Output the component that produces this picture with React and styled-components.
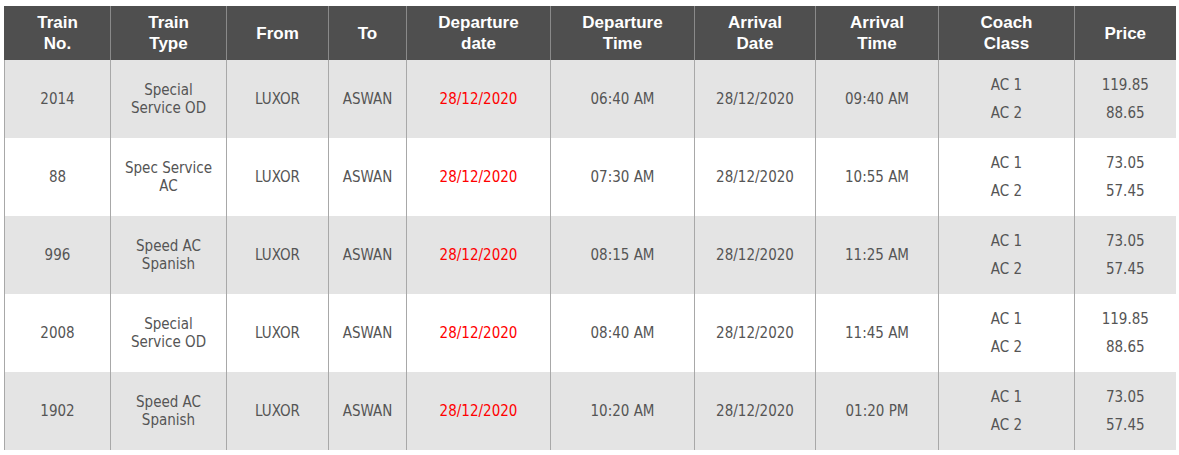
import React from 'react'
import styled, { createGlobalStyle } from 'styled-components';

const trains = [
  { no: '2014', type: ['Special', 'Service OD'], dep: '06:40 AM', arr: '09:40 AM', prices: ['119.85', '88.65'] },
  { no: '88', type: ['Spec Service', 'AC'], dep: '07:30 AM', arr: '10:55 AM', prices: ['73.05', '57.45'] },
  { no: '996', type: ['Speed AC', 'Spanish'], dep: '08:15 AM', arr: '11:25 AM', prices: ['73.05', '57.45'] },
  { no: '2008', type: ['Special', 'Service OD'], dep: '08:40 AM', arr: '11:45 AM', prices: ['119.85', '88.65'] },
  { no: '1902', type: ['Speed AC', 'Spanish'], dep: '10:20 AM', arr: '01:20 PM', prices: ['73.05', '57.45'] }
];

const columns = [
  { w: 106, label: ['Train', 'No.'] },
  { w: 116, label: ['Train', 'Type'] },
  { w: 102, label: ['From'] },
  { w: 78, label: ['To'] },
  { w: 144, label: ['Departure', 'date'] },
  { w: 144, label: ['Departure', 'Time'] },
  { w: 121, label: ['Arrival', 'Date'] },
  { w: 123, label: ['Arrival', 'Time'] },
  { w: 136, label: ['Coach', 'Class'] },
  { w: 101, label: ['Price'] }
];

const Lines = ({ lines }) => lines.map((l, i) => <div key={i}>{l}</div>);

const App = () => (
  <>
    <Global />
    <Table>
      <colgroup>
        {columns.map((c, i) => <col key={i} style={{ width: c.w }} />)}
      </colgroup>
      <thead>
        <tr>
          {columns.map((c, i) => <Th key={i}><Lines lines={c.label} /></Th>)}
        </tr>
      </thead>
      <tbody>
        {trains.map((t, key) =>
          <Row key={key} $shaded={key % 2 === 0}>
            <Td>{t.no}</Td>
            <Td><Lines lines={t.type} /></Td>
            <Td>LUXOR</Td>
            <Td>ASWAN</Td>
            <Td $red>28/12/2020</Td>
            <Td>{t.dep}</Td>
            <Td>28/12/2020</Td>
            <Td>{t.arr}</Td>
            <Td><Pair><div>AC 1</div><div>AC 2</div></Pair></Td>
            <Td><Pair><Lines lines={t.prices} /></Pair></Td>
          </Row>
        )}
      </tbody>
    </Table>
  </>
);

const Global = createGlobalStyle`
  body {
    margin: 0;
    background: #fff;
  }
`;

const Table = styled.table`
  margin: 6px 0 0 4px;
  width: 1171px;
  border-collapse: collapse;
  table-layout: fixed;
`;

const Th = styled.th`
  height: 54px;
  padding: 0 4px;
  background: #4f4f4f;
  color: #fff;
  font-family: "Liberation Sans", Arial, sans-serif;
  font-weight: bold;
  font-size: 17px;
  line-height: 21px;
  text-align: center;
  vertical-align: middle;
  border-left: 1px solid #8a8a8a;

  &:first-child {
    border-left: 1px solid #4f4f4f;
  }
`;

const Row = styled.tr`
  background: ${p => p.$shaded ? '#e4e4e4' : '#fff'};
`;

const Td = styled.td`
  height: 78px;
  padding: 0 4px;
  font-family: "DejaVu Sans Condensed", "DejaVu Sans", sans-serif;
  font-size: 15px;
  line-height: 18px;
  color: ${p => p.$red ? '#ff0000' : '#555'};
  text-align: center;
  vertical-align: middle;
  border-left: 1px solid #a8a8a8;
`;

const Pair = styled.div`
  display: flex;
  flex-direction: column;
  gap: 10px;
`;

export default App;
